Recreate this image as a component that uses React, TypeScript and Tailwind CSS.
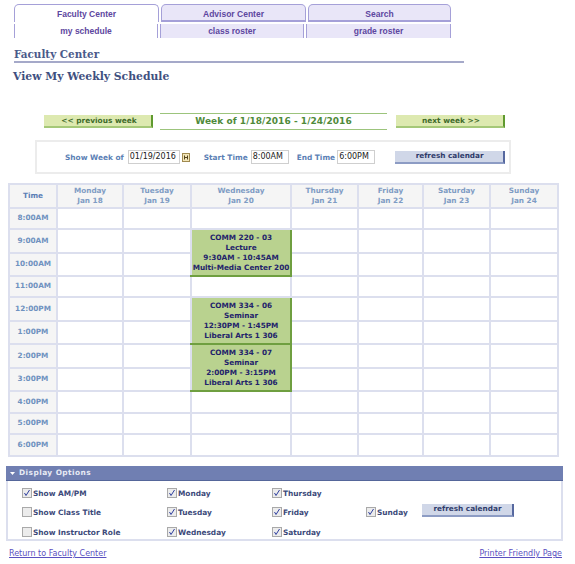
import type React from "react";

const days = [
  { name: "Monday", date: "Jan 18", w: "w-[66px]" },
  { name: "Tuesday", date: "Jan 19", w: "w-[68px]" },
  { name: "Wednesday", date: "Jan 20", w: "w-[100px]" },
  { name: "Thursday", date: "Jan 21", w: "w-[67px]" },
  { name: "Friday", date: "Jan 22", w: "w-[65px]" },
  { name: "Saturday", date: "Jan 23", w: "w-[67px]" },
  { name: "Sunday", date: "Jan 24", w: "w-[68px]" },
];

const rows = [
  { time: "8:00AM", h: "h-[21px]" },
  { time: "9:00AM", h: "h-[24px]" },
  { time: "10:00AM", h: "h-[23px]" },
  { time: "11:00AM", h: "h-[21px]" },
  { time: "12:00PM", h: "h-[24px]" },
  { time: "1:00PM", h: "h-[23px]" },
  { time: "2:00PM", h: "h-[24px]" },
  { time: "3:00PM", h: "h-[23px]" },
  { time: "4:00PM", h: "h-[22px]" },
  { time: "5:00PM", h: "h-[21px]" },
  { time: "6:00PM", h: "h-[22px]" },
];

// 行番号 -> 授業ブロック
const classes: Record<number, { span: number; lines: string[] }> = {
  1: { span: 2, lines: ["COMM 220 - 03", "Lecture", "9:30AM - 10:45AM", "Multi-Media Center 200"] },
  4: { span: 2, lines: ["COMM 334 - 06", "Seminar", "12:30PM - 1:45PM", "Liberal Arts 1 306"] },
  6: { span: 2, lines: ["COMM 334 - 07", "Seminar", "2:00PM - 3:15PM", "Liberal Arts 1 306"] },
};
const covered = [2, 5, 7];

const cellLine = "border-2 border-[#dcdfee]";

const Check: React.FC<{ on?: boolean }> = ({ on }) => (
  <span className="flex h-[10px] w-[10px] shrink-0 items-center justify-center border border-[#a9a9a9] bg-[#ececec]">
    {on && (
      <svg width="8" height="8" viewBox="0 0 8 8">
        <path d="M1.5 4 L3 6.5 L6.5 1" fill="none" stroke="#2f3f9f" strokeWidth="1" />
      </svg>
    )}
  </span>
);

const Option: React.FC<{ label: string; on?: boolean }> = ({ label, on }) => (
  <div className="flex items-center gap-[1px] whitespace-nowrap text-[7.4px] font-bold text-[#3c4a7a]">
    <Check on={on} />
    <span className="mt-[2px]">{label}</span>
  </div>
);

const GreenBtn: React.FC<{ label: string; w: string }> = ({ label, w }) => (
  <div className={`${w} flex h-[13px] items-center justify-center border-r-2 border-b-2 border-r-[#5f9a2f] border-b-[#a5c878] bg-[#dde9b0] pl-[3px] text-[7.4px] font-bold text-[#3f6b2a]`}>
    {label}
  </div>
);

const BlueBtn: React.FC<{ w: string }> = ({ w }) => (
  <div className={`${w} flex h-[13px] items-center justify-center border-r-2 border-b-2 border-r-[#56689f] border-b-[#8d9cc4] bg-[#d0d7e8] pl-[1px] text-[7.3px] font-bold text-[#2f3b6b]`}>
    refresh calendar
  </div>
);

const Field: React.FC<{ label: string; value: string; w: string }> = ({ label, value, w }) => (
  <>
    <span className="mt-[2px] whitespace-nowrap text-[7.4px] font-bold text-[#5b7fb5]">{label}</span>
    <span className={`${w} flex h-[14px] items-center border border-[#cfcfcf] pl-[1px] text-[8px] text-[#222]`}>{value}</span>
  </>
);

export default function App() {
  return (
    <div className="h-[564px] w-[575px] overflow-hidden bg-white pt-[4px] font-['DejaVu_Sans',sans-serif]">
      {/* タブ */}
      <div className="ml-[14px] flex h-[18px] gap-[2px] font-['Liberation_Sans',sans-serif] text-[8.5px] font-bold text-[#5d46a0]">
        <div className="flex w-[145px] items-center justify-center rounded-t-[5px] border border-b-0 border-[#a5a0d8] bg-white pt-[2px]">Faculty Center</div>
        <div className="flex w-[145px] items-center justify-center rounded-t-[5px] border border-b-2 border-[#a5a0d8] bg-[#e9e6f8] pt-[3px]">Advisor Center</div>
        <div className="flex w-[143px] items-center justify-center rounded-t-[5px] border border-b-2 border-[#a5a0d8] bg-[#e9e6f8] pt-[3px]">Search</div>
      </div>
      <div className="ml-[14px] mt-[2px] flex h-[14px] gap-[2px] font-['Liberation_Sans',sans-serif] text-[8.5px] font-bold text-[#5d46a0]">
        <div className="flex w-[144px] items-center justify-center border-x border-[#a5a0d8] bg-white pt-[1px]">my schedule</div>
        <div className="flex w-[144px] items-center justify-center border-x border-[#a5a0d8] bg-[#e9e6f8] pt-[1px]">class roster</div>
        <div className="flex w-[145px] items-center justify-center border-x border-[#a5a0d8] bg-[#e9e6f8] pt-[1px]">grade roster</div>
      </div>

      {/* タイトル */}
      <div className="ml-[14px] mt-[9px] h-[16px] w-[450px] border-b-2 border-[#a5a9c9] font-['DejaVu_Serif',serif] text-[10.4px] font-bold leading-[14px] text-[#4a5a8a]">
        Faculty Center
      </div>
      <div className="ml-[13px] mt-[6px] font-['DejaVu_Serif',serif] text-[10.8px] font-bold leading-[16px] text-[#3f5080]">
        View My Weekly Schedule
      </div>

      {/* 週ナビ */}
      <div className="ml-[44px] mt-[28px] flex items-center">
        <GreenBtn label="<< previous week" w="w-[109px]" />
        <div className="ml-[7px] flex h-[17px] w-[227px] items-center justify-center border-y border-[#9cc47c] pt-[1px] text-[9px] font-bold tracking-[0.05px] text-[#4f8a3a]">
          Week of 1/18/2016 - 1/24/2016
        </div>
        <div className="ml-[9px]">
          <GreenBtn label="next week >>" w="w-[109px]" />
        </div>
      </div>

      {/* 絞り込み */}
      <div className="ml-[35px] mt-[10px] flex h-[34px] w-[476px] items-center border-2 border-[#ececec] pl-[28px]">
        <Field label="Show Week of" value="01/19/2016" w="ml-[4px] w-[52px]" />
        <svg className="ml-[2px]" width="8" height="9" viewBox="0 0 8 9">
          <rect x="0.5" y="0.5" width="7" height="8" fill="#f3e6b8" stroke="#a08a50" />
          <path d="M2.5 2.5 V6.5 M5.5 2.5 V6.5 M2.5 4.5 H5.5" stroke="#55451f" />
        </svg>
        <span className="w-[14px]" />
        <Field label="Start Time" value="8:00AM" w="ml-[3px] w-[38px]" />
        <span className="w-[8px]" />
        <Field label="End Time" value="6:00PM" w="ml-[2px] w-[38px]" />
        <span className="w-[20px]" />
        <div className="mt-[1px]">
          <BlueBtn w="w-[110px]" />
        </div>
      </div>

      {/* カレンダー */}
      <table className="ml-[8px] mt-[9px] w-[550px] table-fixed border-collapse border-2 border-[#dcdfee] text-[7.3px] font-bold">
        <thead>
          <tr className="h-[24px] bg-[#f5f5f5]">
            <th className={`${cellLine} w-[48px] font-bold text-[#5b7fb5]`}>Time</th>
            {days.map((d) => (
              <th key={d.name} className={`${cellLine} ${d.w} font-bold leading-[10px] text-[#7f9cc4]`}>
                {d.name}
                <br />
                {d.date}
              </th>
            ))}
          </tr>
        </thead>
        <tbody>
          {rows.map((r, i) => (
            <tr key={r.time} className={r.h}>
              <td className={`${cellLine} bg-[#f5f5f5] p-0 text-center text-[#6f92c0]`}>{r.time}</td>
              {days.map((d, j) => {
                if (j === 2) {
                  if (covered.includes(i)) return null;
                  const c = classes[i];
                  if (c) {
                    return (
                      <td
                        key={d.name}
                        rowSpan={c.span}
                        className={`${cellLine} border-r-[#6f9f40] border-b-[#6f9f40] bg-[#b9d28f] p-0 text-center leading-[10px] text-[#23236b]`}
                      >
                        {c.lines.map((l) => (
                          <div key={l} className="whitespace-nowrap">{l}</div>
                        ))}
                      </td>
                    );
                  }
                }
                return <td key={d.name} className={cellLine} />;
              })}
            </tr>
          ))}
        </tbody>
      </table>

      {/* 表示オプション */}
      <div className="ml-[6px] mt-[9px] w-[557px] border-2 border-t-0 border-[#dcdfee]">
        <div className="-mx-[2px] flex h-[15px] items-center gap-[4px] border-b border-[#55669a] bg-[#707fb2] pl-[4px] text-[7.4px] font-bold tracking-[0.45px] text-[#e8ebf5]">
          <svg width="5" height="3" viewBox="0 0 5 3">
            <path d="M0 0 H5 L2.5 3 Z" fill="#fff" />
          </svg>
          Display Options
        </div>
        <div className="grid h-[58px] grid-cols-[145px_105px_94px_56px_1fr] grid-rows-[20px_18px_22px] items-center pl-[14px] pt-[2px]">
          <Option label="Show AM/PM" on />
          <Option label="Monday" on />
          <Option label="Thursday" on />
          <span />
          <span />
          <Option label="Show Class Title" />
          <Option label="Tuesday" on />
          <Option label="Friday" on />
          <Option label="Sunday" on />
          <div className="-mt-[3px]">
            <BlueBtn w="w-[92px]" />
          </div>
          <Option label="Show Instructor Role" />
          <Option label="Wednesday" on />
          <Option label="Saturday" on />
        </div>
      </div>

      {/* リンク */}
      <div className="ml-[9px] mt-[7px] flex w-[553px] justify-between text-[8px] text-[#5a4fc0] underline">
        <span>Return to Faculty Center</span>
        <span>Printer Friendly Page</span>
      </div>
    </div>
  );
}
